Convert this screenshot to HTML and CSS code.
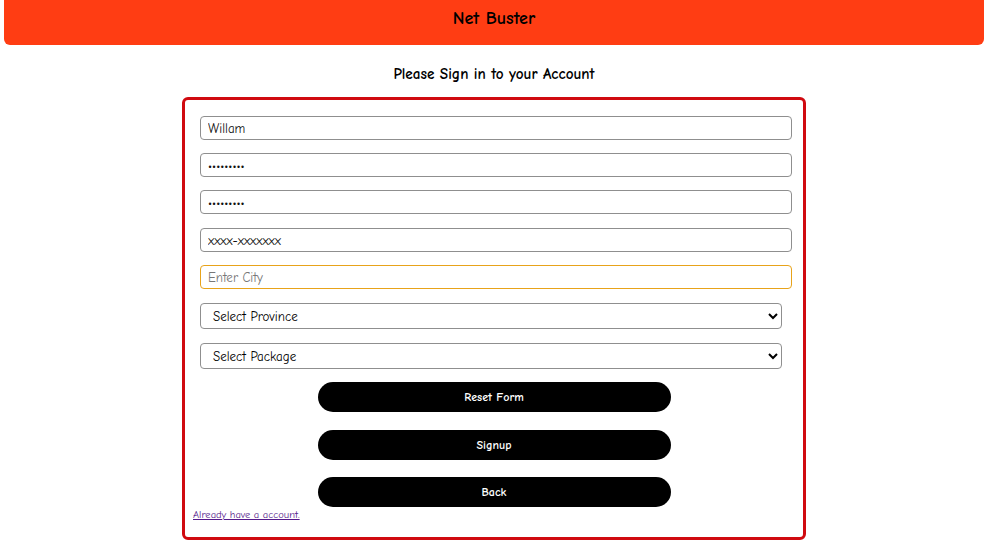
FILE: index.html
```html
<!DOCTYPE html>
<html>
<head>
<meta charset="utf-8">
<link rel="stylesheet" href="styles.css">
</head>
<body>
<header class="topbar"><h1 class="brand">Net Buster</h1></header>
<h2 class="heading">Please Sign in to your Account</h2>
<form class="card">
  <input class="field" type="text" value="Willam">
  <input class="field" type="password" value="123456789">
  <input class="field field-gap" type="password" value="123456789">
  <input class="field" type="text" value="xxxx-xxxxxxx">
  <input class="field field-focus" type="text" placeholder="Enter City">
  <select class="choice"><option>Select Province</option></select>
  <select class="choice"><option>Select Package</option></select>
  <button type="button" class="btn">Reset Form</button>
  <button type="button" class="btn">Signup</button>
  <button type="button" class="btn">Back</button>
  <a class="link" href="#">Already have a account.</a>
</form>
</body>
</html>
```
FILE: styles.css
```css
* { box-sizing: border-box; }
body {
  margin: 0 4px;
  font-family: "Comic Sans MS", "Comic Neue", "Open Sans", sans-serif;
  background: #fff;
  color: #000;
}
.topbar {
  background: #ff3d13;
  height: 45px;
  border-radius: 0 0 6px 6px;
  display: flex;
  align-items: center;
  justify-content: center;
}
.brand {
  margin: 0 0 8px;
  font-size: 18px;
  font-weight: bold;
}
.heading {
  margin: 20px 0 14px;
  text-align: center;
  font-size: 15.2px;
  font-weight: bold;
  line-height: 18px;
}
.card {
  width: 624px;
  margin: 0 auto;
  border: 3px solid #d00a10;
  border-radius: 6px;
  padding: 16px 8px 15px;
  display: flex;
  flex-direction: column;
}
.field {
  width: 592px;
  height: 24px;
  margin: 0 0 13px 7px;
  border: 1px solid #8f8f8f;
  border-radius: 4px;
  padding: 0 7px;
  font-family: inherit;
  font-size: 13px;
  color: #111;
  outline: none;
}
.field-gap { margin-bottom: 14px; }
.field-focus {
  border-color: #e8a31a;
  margin-bottom: 14px;
}
.field::placeholder { color: #777; }
.choice {
  width: 582px;
  height: 26px;
  margin: 0 0 14px 7px;
  border: 1px solid #8f8f8f;
  border-radius: 4px;
  padding: 0 8px;
  font-family: inherit;
  font-size: 13px;
  background: #fff;
  color: #000;
}
.choice:last-of-type { margin-bottom: 13px; }
.btn {
  width: 353px;
  height: 30px;
  align-self: center;
  margin: 0 0 18px 0;
  border: none;
  border-radius: 15px;
  background: #000;
  color: #fff;
  font-family: inherit;
  font-size: 12px;
  font-weight: bold;
}
.btn:nth-of-type(2) { margin-bottom: 17px; }
.btn:last-of-type { margin-bottom: 1px; }
.link {
  align-self: flex-start;
  margin-left: 0;
  font-size: 10.5px;
  line-height: 14px;
  color: #551a8b;
}
```
